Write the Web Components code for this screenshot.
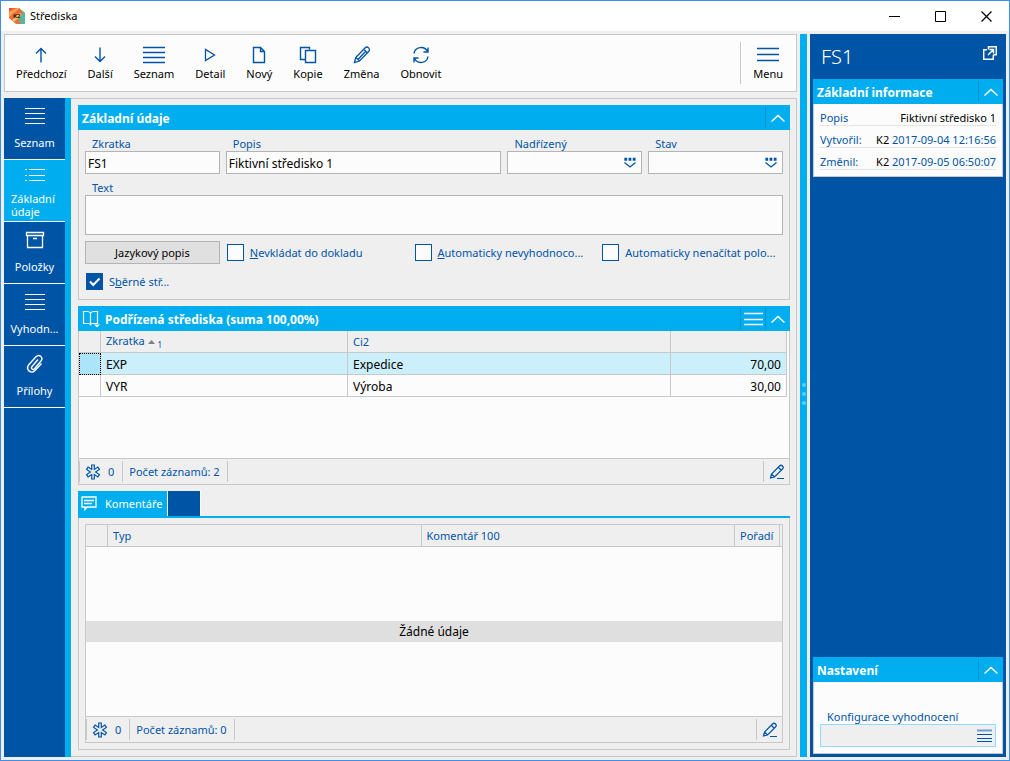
<!DOCTYPE html>
<html lang="cs">
<head>
<meta charset="utf-8">
<title>Střediska</title>
<style>
  html { --cyan: #00adef; --navy: #0054a6; --face: #efefef; --paper: #fcfcfc; --line: #c8c8c8; --edge: #b4b4b4; }
  body { margin: 0; font: 12px/16px "Noto Sans", "Open Sans", sans-serif; color: #000; }
</style>
</head>
<body>
<k2-window heading="Střediska">
  <k2-toolbar slot="toolbar">
    <k2-tool icon="up" label="Předchozí"></k2-tool>
    <k2-tool icon="down" label="Další"></k2-tool>
    <k2-tool icon="list" label="Seznam"></k2-tool>
    <k2-tool icon="play" label="Detail"></k2-tool>
    <k2-tool icon="page" label="Nový"></k2-tool>
    <k2-tool icon="copy" label="Kopie"></k2-tool>
    <k2-tool icon="pencil" label="Změna"></k2-tool>
    <k2-tool icon="refresh" label="Obnovit"></k2-tool>
    <k2-tool slot="end" icon="menu" label="Menu"></k2-tool>
  </k2-toolbar>

  <k2-nav slot="nav">
    <k2-nav-item icon="navlist" label="Seznam"></k2-nav-item>
    <k2-nav-item icon="bullets" label="Základní údaje" active></k2-nav-item>
    <k2-nav-item icon="box" label="Položky"></k2-nav-item>
    <k2-nav-item icon="navlist" label="Vyhodn..."></k2-nav-item>
    <k2-nav-item icon="clip" label="Přílohy"></k2-nav-item>
  </k2-nav>

  <k2-panel heading="Základní údaje"><k2-basic-form></k2-basic-form></k2-panel>

  <k2-panel heading="Podřízená střediska (suma 100,00%)" icon="book" menu>
    <k2-departments></k2-departments>
    <k2-status count="0" total="Počet záznamů: 2"></k2-status>
  </k2-panel>

  <k2-comments class="grow"></k2-comments>

  <k2-side slot="side" heading="FS1">
    <k2-panel heading="Základní informace"><k2-facts></k2-facts></k2-panel>
    <k2-panel slot="bottom" heading="Nastavení"><k2-settings></k2-settings></k2-panel>
  </k2-side>
</k2-window>

<script>
const ICONS = {
  up: [14, 16, '<path d="M7 15.500V1.500M2 6.500 7 1.500l5 5" stroke-width="1.400"/>'],
  down: [14, 16, '<path d="M7 .5v14M2 9.500l5 5 5-5" stroke-width="1.400"/>'],
  list: [22, 18, '<path d="M0 1.500h22M0 6.500h22M0 11.500h22M0 16.500h22" stroke-width="1.400"/>'],
  menu: [22, 16, '<path d="M0 1.500h22M0 7.500h22M0 13.500h22" stroke-width="1.400"/>'],
  play: [14, 16, '<path d="M2.500 2.500v11L11.500 8z" stroke-width="1.300"/>'],
  page: [14, 18, '<path d="M1.500 1.500h7l4 4v11h-11zM8.500 1.500v4h4" stroke-width="1.400"/>'],
  copy: [18, 18, '<path d="M6.500 13.500h-5v-12h9v2M6.500 4.500h10v12h-10z" stroke-width="1.400"/>'],
  pencil: [18, 18, '<path d="M1.500 16.500l1.200-5L12 2a2.300 2.300 0 0 1 3.700 3.500L6.500 15zM3 11.500 6.500 15M5.200 13.200l7.300-7.700M11 3.500 14.500 7" stroke-width="1.300"/>'],
  refresh: [18, 18, '<path d="M2 7.500C3 0.500 12.500-.5 15.500 5.500M16 1.500v4.500h-4.500M16 10.500c-1 7-10.500 8-13.500 2M2 16.500V12h4.500" stroke-width="1.400"/>'],
  navlist: [20, 18, '<path d="M0 1.500h20M0 6.500h20M0 11.500h20M0 16.500h20"/>'],
  bullets: [20, 14, '<path d="M0 1.500h2M4 1.500h16M0 7.500h2M4 7.500h16M0 12.500h2M4 12.500h16"/>'],
  box: [20, 18, '<path d="M1.500 1.500h17v3h-17zM2.500 4.500v12h15v-12M8 7.500h4" stroke-width="1.300"/>'],
  clip: [18, 20, '<path d="M12 5.500 6 12.500c-1.500 2 .8 4 2.500 2.300L15 7c2.800-3.500-2-7.500-5-4.300L3 10.500c-4 5 2 10 6 6l6.500-7" stroke-width="1.400"/>'],
  book: [18, 18, '<path d="M8.500 3C7.700 1.900 6.500 1.500 5 1.500H1.500v12h4.800c1.200 0 2.200.8 2.200 2 0-1.200 1-2 2.200-2h4.800v-12H12c-1.500 0-2.700.4-3.500 1.500zv12" stroke-width="1.200"/><path fill="currentColor" stroke="none" d="M12 14.500h6l-3 3z"/>'],
  chevron: [14, 8, '<path d="M.5 7.500 7 1.500l6.500 6" stroke-width="1.400"/>'],
  hmenu: [19, 14, '<path d="M0 1.500h19M0 7.500h19M0 12.500h19" stroke-width="1.300"/>'],
  drop: [12, 11, '<path d="M1 1.500h1.500v1.500H1zM5.200 1.500h1.500v1.500H5.200zM9.400 1.500h1.500v1.500H9.400zM.5 5.500 6 10l5.500-4.500" stroke-width="1.300"/>'],
  star: [16, 16, '<path stroke-width="1.200" d="M6.700 1h2.600v4.400l3.600-2.300 1.500 2.300L10.600 8l3.800 2.600-1.500 2.300-3.600-2.300V15H6.700v-4.400l-3.600 2.300-1.500-2.300L5.400 8 1.600 5.400l1.500-2.300 3.600 2.300z"/>'],
  edit: [16, 16, '<path stroke-width="1.200" d="M1.500 14l1-4L10.500 2a1.900 1.900 0 0 1 3 3L5.500 13zM2.500 10l3 3M9.500 3.500l2.500 2.500M8 14.500h7"/>'],
  bubble: [16, 15, '<path stroke-width="1.300" d="M1 1h14v10H6l-2 2.500V11H1zM3 4.500h10M3 7.500h8"/>'],
  open: [14, 14, '<path d="M5.500 3.500V.7h7.800v8h-3M4 3.700H.7v9.600h9.600V9M5 9l5.500-5.500M6.500 3.500h4v4" stroke-width="1.500"/>'],
  lines: [15, 14, '<path d="M0 1.500h15" stroke="#6f9dcc" stroke-width="2"/><path d="M0 5.500h15M0 9.500h15M0 12.500h15"/>'],
  sort: [7, 4, '<path fill="#808080" stroke="none" d="M0 4 3.500 0 7 4z"/>'],
  tick: [15, 15, '<path d="M3 7.500l3.200 3.500L12.500 4.500" stroke-width="2"/>'],
  min: [11, 11, '<path d="M0 5.500h11"/>'],
  max: [11, 11, '<path d="M.5.5h10v10H.5z"/>'],
  close: [11, 11, '<path d="M.5.5l10 10M10.500.5l-10 10" stroke-width="1.200"/>']
};

const define = (tag, css, html) => customElements.define(tag, class extends HTMLElement {
  connectedCallback() {
    if (this.shadowRoot) return;
    const t = document.createElement('template');
    t.innerHTML = `<style>*{box-sizing:border-box}button,input,select,textarea{font:inherit;color:inherit;margin:0;padding:0;border:0;border-radius:0;background:none}${css}</style>${html(n => this.getAttribute(n) || '', this)}`;
    this.attachShadow({ mode: 'open' }).append(t.content.cloneNode(true));
  }
});

define('k2-icon', ':host{display:inline-flex;flex:none}svg{display:block;fill:none;stroke:currentColor}', a => {
  const [w, h, p] = ICONS[a('name')];
  return `<svg width="${w}" height="${h}" viewBox="0 0 ${w} ${h}" aria-hidden="true">${p}</svg>`;
});

define('k2-window', `
  :host{display:flex;flex-direction:column;box-sizing:border-box;min-height:100vh;border:1px solid #3c8fee;background:var(--face)}
  header{display:flex;align-items:center;height:30px;padding-left:8px;background:#fff;gap:4px}
  h1{font:inherit;font-size:11px;margin:0;flex:1}
  .controls{display:flex}
  header button{display:flex;width:46px;height:29px;align-items:center;justify-content:center}
  .body{flex:1;display:flex;gap:3px;padding:3px}
  .main{flex:1;min-width:0;display:flex;flex-direction:column;gap:6px}
  .work{flex:1;display:flex}
  .content{flex:1;min-width:0;display:flex;flex-direction:column;gap:6px;padding:6px 6px 6px 7px;border:1px solid var(--line);border-left:0}
  ::slotted(.grow){flex:1}
  .split{width:7px;padding-bottom:4px;background:var(--cyan);display:flex;flex-direction:column;gap:5px;align-items:center;justify-content:center}
  .split i{width:4px;height:4px;border-radius:2px;background:#5fcdf8}
`, a => `
  <header>
    <svg width="17" height="17" viewBox="0 0 17 17" aria-hidden="true">
      <path fill="#f26a3d" d="M0 0h10l6 5v11H7L0 10z"/><path fill="#f9a04a" d="M0 4 8 0h3L0 9z"/>
      <path fill="#ef4b3c" d="M0 0h4L0 3z"/><path fill="#55b79b" d="M10 0l6 5v11h-4l-3-5 5-5z"/>
      <path fill="#e8c25a" d="M3 12l8-7 2 2-8 7z"/>
      <text x="4" y="10" font-family="Noto Sans, sans-serif" font-size="6" font-weight="700" fill="#222">K2</text>
    </svg>
    <h1>${a('heading')}</h1>
    <div class="controls">
      <button aria-label="Minimalizovat"><k2-icon name="min"></k2-icon></button>
      <button aria-label="Maximalizovat"><k2-icon name="max"></k2-icon></button>
      <button aria-label="Zavřít"><k2-icon name="close"></k2-icon></button>
    </div>
  </header>
  <div class="body">
    <div class="main"><slot name="toolbar"></slot>
      <div class="work"><slot name="nav"></slot><main class="content"><slot></slot></main></div>
    </div>
    <div class="split"><i></i><i></i><i></i></div>
    <slot name="side"></slot>
  </div>`);

define('k2-toolbar', `
  :host{display:flex;box-sizing:border-box;height:58px;padding:0 13px 0 11px;gap:21px;border:1px solid var(--line);background:var(--paper)}
  .end{margin-left:auto;margin-block:7px;padding-left:12px;border-left:1px solid var(--line);display:flex}
  .end ::slotted(*){margin-block:-7px}
`, () => `<slot></slot><div class="end"><slot name="end"></slot></div>`);

define('k2-tool', `
  :host{display:flex}
  button{display:flex;flex-direction:column;align-items:center;padding-top:10px;gap:1px;font-size:11px}
  .pic{height:20px;display:flex;align-items:center;color:var(--navy)}
`, a => `<button><span class="pic"><k2-icon name="${a('icon')}"></k2-icon></span><span>${a('label')}</span></button>`);

define('k2-nav', `:host{display:flex;flex-direction:column;width:67px;box-sizing:border-box;background:var(--navy);border-right:6px solid var(--cyan)}`, () => `<slot></slot>`);

define('k2-nav-item', `
  :host{display:flex;height:62px;box-sizing:border-box;border-bottom:1px solid #fff;color:#fff}
  :host([active]){background:var(--cyan)}
  button{flex:1;min-width:0;display:flex;flex-direction:column;align-items:center;padding:9px 7px 0;gap:10px;font-size:11px}
  :host([active]) button{line-height:13px;text-align:left;padding-top:6px;gap:8px}
  .pic{display:flex;height:18px;align-items:center}
`, a => `<button><span class="pic"><k2-icon name="${a('icon')}"></k2-icon></span><span>${a('label')}</span></button>`);

define('k2-panel', `
  :host{display:flex;flex-direction:column}
  header{display:flex;height:25px;align-items:center;padding-left:4px;background:var(--cyan);color:#fff}
  h2{font:inherit;font-weight:700;margin:0;padding-top:2px;flex:1}
  header>k2-icon{margin-right:5px}
  button{display:flex;align-items:center;justify-content:center;width:25px;height:21px;border-left:1px solid #0092cc}
  .body{border:1px solid var(--line);border-top:0}
`, a => `<header>${a('icon') ? `<k2-icon name="${a('icon')}"></k2-icon>` : ''}<h2>${a('heading')}</h2>
  ${a('icon') ? '<button aria-label="Nabídka"><k2-icon name="hmenu"></k2-icon></button>' : ''}
  <button aria-label="Sbalit"><k2-icon name="chevron"></k2-icon></button></header>
  <div class="body"><slot></slot></div>`);

define('k2-field', `
  :host{display:block;min-width:0}
  label{display:block;padding-left:7px;font-size:11px;line-height:15px;color:var(--navy)}
  .box{display:grid;align-items:center;border:1px solid var(--edge);background:var(--paper)}
  .box>*{grid-area:1/1;width:100%;min-width:0}
  input,select{height:21px;padding:1px 2px 0;appearance:none}
  textarea{display:block;height:38px;resize:none}
  .box>k2-icon{width:auto;justify-self:end;margin-right:5px;color:var(--navy);pointer-events:none}
  :host([tint]) .box{background:var(--face);border-color:#8fdcfb}
  :host([tint]) .box>k2-icon{margin-right:3px}
`, a => {
  const k = a('kind');
  const c = k === 'select' ? '<select id="f"><option></option></select><k2-icon name="drop"></k2-icon>'
    : k === 'area' ? '<textarea id="f"></textarea>'
    : `<input id="f" value="${a('value')}">${k === 'lookup' ? '<k2-icon name="lines"></k2-icon>' : ''}`;
  return `<label for="f">${a('label')}</label><div class="box">${c}</div>`;
});

define('k2-check', `
  :host{display:block;min-width:0;color:var(--navy)}
  label{display:flex;align-items:center;gap:6px;height:23px;padding-left:1px;font-size:11px;white-space:nowrap}
  .tick{display:grid;color:#fff;flex:none}
  .tick>*{grid-area:1/1;place-self:center}
  input{appearance:none;width:17px;height:17px;border:1px solid var(--navy);background:var(--paper)}
  input:checked{background:var(--navy)}
  input:not(:checked)+k2-icon{visibility:hidden}
  k2-icon{pointer-events:none}
`, (a, el) => `<label><span class="tick"><input type="checkbox" ${el.hasAttribute('checked') ? 'checked' : ''}><k2-icon name="tick"></k2-icon></span><span><slot></slot></span></label>`);

define('k2-basic-form', `
  :host{display:grid;grid-template-columns:repeat(5,minmax(0,1fr));gap:6px;padding:6px}
  .w2{grid-column:span 2}.w5{grid-column:1/-1}
  .checks{grid-column:span 4;display:grid;grid-template-columns:repeat(3,minmax(0,1fr));gap:6px}
  button{height:23px;border:1px solid var(--edge);background:#e0e0e0;font-size:11px}
`, () => `
  <k2-field label="Zkratka" value="FS1"></k2-field>
  <k2-field class="w2" label="Popis" value="Fiktivní středisko 1"></k2-field>
  <k2-field kind="select" label="Nadřízený"></k2-field>
  <k2-field kind="select" label="Stav"></k2-field>
  <k2-field class="w5" kind="area" label="Text"></k2-field>
  <button>Jazykový popis</button>
  <div class="checks">
    <k2-check><u>N</u>evkládat do dokladu</k2-check>
    <k2-check><u>A</u>utomaticky nevyhodnoco...</k2-check>
    <k2-check>Automaticky nenačítat polo...</k2-check>
  </div>
  <k2-check checked>S<u>b</u>ěrné stř...</k2-check>`);

const TABLE = `
  table{border-collapse:separate;border-spacing:0;table-layout:fixed;width:100%}
  th,td{height:22px;padding:0 5px;border:0 solid var(--line);border-width:0 1px 1px 0;text-align:left;font-weight:400;line-height:16px;white-space:nowrap}
  td{padding-top:2px}
  th{background:var(--face);color:var(--navy);font-size:11px}`;

define('k2-departments', `${TABLE}
  :host{display:block;min-height:127px;padding-right:2px;background:var(--paper)}
  .mark{width:22px}.code{width:247px}.share{width:116px}
  .num{text-align:right}
  .on td{background:#cbeffb}
  .on td:first-child{background:#ace5fa;outline:1px dotted #000;outline-offset:-1px}
  small{font-size:8px;vertical-align:sub;line-height:8px}
  k2-icon{vertical-align:middle}
`, () => `<table>
  <colgroup><col class="mark"><col class="code"><col><col class="share"></colgroup>
  <thead><tr><th></th><th>Zkratka <k2-icon name="sort"></k2-icon> <small>1</small></th><th>Ci2</th><th></th></tr></thead>
  <tbody>
    <tr class="on"><td></td><td>EXP</td><td>Expedice</td><td class="num">70,00</td></tr>
    <tr><td></td><td>VYR</td><td>Výroba</td><td class="num">30,00</td></tr>
  </tbody></table>`);

define('k2-status', `
  :host{display:flex;box-sizing:border-box;height:26px;padding:2px 0;border-top:1px solid var(--line);background:var(--face);color:var(--navy);font-size:11px}
  span,button{display:flex;align-items:center;gap:7px;padding:0 7px 0 6px;border-left:1px solid var(--line)}
  .count{padding:0 8px 0 5px}.total{border-right:1px solid var(--line)}
  button{margin-left:auto;padding:0 4px 0 5px}
`, a => `<span class="count"><k2-icon name="star"></k2-icon>${a('count')}</span><span class="total">${a('total')}</span>
  <button aria-label="Upravit"><k2-icon name="edit"></k2-icon></button>`);

define('k2-comments', `${TABLE}
  :host{display:flex;flex-direction:column}
  .tabs{display:flex;height:27px;border-bottom:2px solid var(--cyan)}
  .tabs button{display:flex;align-items:center;gap:8px;padding:0 5px 0 3px;background:var(--cyan);color:#fff;border-right:1px solid #fff;font-size:11px;box-sizing:content-box}
  .tabs .blank{width:32px;padding:0;background:var(--navy)}
  .body{flex:1;display:flex;border:1px solid var(--line);border-top:0;padding:6px}
  .grid{flex:1;display:flex;flex-direction:column;border:1px solid var(--line);background:var(--paper)}
  .head{background:var(--face);padding-right:2px;border-bottom:1px solid var(--line)}
  th{height:21px;border-bottom:0}
  .mark{width:22px}.ord{width:45px}
  .empty{flex:1;display:flex;flex-direction:column;justify-content:center;min-height:60px}
  .empty p{margin:0;background:#dfdfdf;line-height:21px;text-align:center}
`, () => `
  <div class="tabs"><button><k2-icon name="bubble"></k2-icon>Komentáře</button><button class="blank" aria-label="Další záložka"></button></div>
  <div class="body"><div class="grid">
    <div class="head"><table><colgroup><col class="mark"><col><col><col class="ord"></colgroup>
      <thead><tr><th></th><th>Typ</th><th>Komentář 100</th><th>Pořadí</th></tr></thead></table></div>
    <div class="empty"><p>Žádné údaje</p></div>
    <k2-status count="0" total="Počet záznamů: 0"></k2-status>
  </div></div>`);

define('k2-side', `
  :host{display:flex;flex-direction:column;box-sizing:border-box;width:196px;padding:0 3px 3px;background:var(--navy);color:#fff}
  .top{display:flex;align-items:center;justify-content:space-between;height:45px;padding:0 6px 0 8px}
  h2{margin:0;font-size:20px;line-height:28px;font-weight:300}
  button{padding-bottom:4px}
  .fill{flex:1}
`, a => `<div class="top"><h2>${a('heading')}</h2><button aria-label="Otevřít v okně"><k2-icon name="open"></k2-icon></button></div>
  <slot></slot><div class="fill"></div><slot name="bottom"></slot>`);

define('k2-facts', `
  :host{display:block;padding:0 6px 6px;background:var(--paper);color:var(--navy);font-size:11px}
  dl{margin:0}
  div{display:flex;justify-content:space-between;height:22px;padding-top:6px;border-bottom:1px solid #e4e4e4;line-height:15px}
  dd{margin:0}b{font-weight:400;color:#000}
`, () => `<dl>
  <div><dt>Popis</dt><dd><b>Fiktivní středisko 1</b></dd></div>
  <div><dt>Vytvořil:</dt><dd><b>K2</b> 2017-09-04 12:16:56</dd></div>
  <div><dt>Změnil:</dt><dd><b>K2</b> 2017-09-05 06:50:07</dd></div></dl>`);

define('k2-settings', `:host{display:block;padding:27px 6px 6px;background:var(--paper)}`,
  () => `<k2-field kind="lookup" tint label="Konfigurace vyhodnocení"></k2-field>`);
</script>
</body>
</html>
